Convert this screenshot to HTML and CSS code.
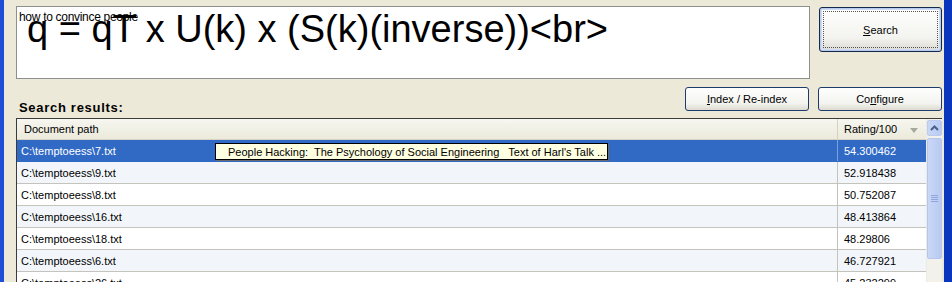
FILE: index.html
```html
<!DOCTYPE html>
<html>
<head>
<meta charset="utf-8">
<link rel="stylesheet" href="styles.css">
</head>
<body>
<div class="window">
  <div class="content">
    <div class="top">
      <div class="query">
        <span class="hint">how to convince people</span>
        <span class="hint-line"></span>
        <div class="big">q = qT x U(k) x (S(k)(inverse))&lt;br&gt;</div>
      </div>
      <div class="btn search"><span class="focus"><u>S</u>earch</span></div>
    </div>
    <div class="mid">
      <div class="label">Search results:</div>
      <div class="btn small idx"><u>I</u>ndex / Re-index</div>
      <div class="btn small cfg">Co<u>n</u>figure</div>
    </div>
    <div class="list">
      <div class="table">
        <div class="row head">
          <div class="c1">Document path</div>
          <div class="c2">Rating/100 <span class="sort"></span></div>
        </div>
        <div class="row sel">
          <div class="c1">C:\temptoeess\7.txt</div>
          <div class="c2">54.300462</div>
          <div class="tip">People Hacking:&nbsp; The Psychology of Social Engineering&nbsp;&nbsp; Text of Harl's Talk ...</div>
        </div>
        <div class="row alt"><div class="c1">C:\temptoeess\9.txt</div><div class="c2">52.918438</div></div>
        <div class="row"><div class="c1">C:\temptoeess\8.txt</div><div class="c2">50.752087</div></div>
        <div class="row alt"><div class="c1">C:\temptoeess\16.txt</div><div class="c2">48.413864</div></div>
        <div class="row"><div class="c1">C:\temptoeess\18.txt</div><div class="c2">48.29806</div></div>
        <div class="row alt"><div class="c1">C:\temptoeess\6.txt</div><div class="c2">46.727921</div></div>
        <div class="row"><div class="c1">C:\temptoeess\26.txt</div><div class="c2">45.232299</div></div>
      </div>
      <div class="scroll">
        <div class="arrow"><svg width="9" height="6" viewBox="0 0 9 6"><path d="M1 5 L4.5 1.5 L8 5" fill="none" stroke="#4d6185" stroke-width="2"/></svg></div>
        <div class="thumb"><span></span><span></span><span></span><span></span></div>
      </div>
    </div>
  </div>
</div>
</body>
</html>
```
FILE: styles.css
```css
* { box-sizing: border-box; }
html, body { margin: 0; padding: 0; }
body {
  width: 952px; height: 282px; overflow: hidden;
  font-family: "Liberation Sans", Arial, sans-serif;
  font-size: 11px; color: #000;
}
.window {
  height: 282px;
  background: #ece9d8;
  border-left: 4px solid #1f4fd6;
  border-right: 8px solid #0a35bd;
}
.content { padding: 6px 2px 0 12px; }
.top { display: flex; align-items: flex-start; height: 81px; }
.query {
  position: relative;
  width: 794px; height: 73px;
  background: #fff;
  border: 1px solid #8e8f8f;
  overflow: hidden;
}
.hint {
  position: absolute; left: 2px; top: 3px; z-index: 1;
  font-size: 12px; letter-spacing: -0.3px;
}
.hint-line {
  position: absolute; left: 98px; top: 8px; z-index: 1;
  width: 21px; height: 2px; background: #000;
}
.big {
  padding: 0 0 0 10px;
  font-size: 38px; line-height: 38px;
  margin-top: 3px;
  white-space: nowrap;
}
.btn {
  display: flex; align-items: center; justify-content: center;
  border: 1px solid #1c3c6c;
  border-radius: 3px;
  background: linear-gradient(#fefefe, #f3f3ef 70%, #dcdad0);
  font-size: 11px;
}
.search {
  margin-left: 9px; margin-top: 1px;
  width: 123px; height: 45px;
  border-color: #13284a;
  box-shadow: inset 0 0 0 1px #b8cbef, inset 0 0 0 2px #cfdcf4;
  padding: 3px;
}
.focus {
  flex: 1; align-self: stretch;
  display: flex; align-items: center; justify-content: center;
  border: 1px dotted #555;
}
.mid { display: flex; align-items: flex-start; height: 31px; }
.label {
  flex: 1;
  font-weight: bold; font-size: 13px;
  padding: 13px 0 0 3px; letter-spacing: 0.7px;
}
.small { width: 124px; height: 24px; margin-right: 9px; }
.cfg { margin-right: 0; }
.list {
  display: flex;
  height: 170px;
  border: 1px solid #3b3b3b;
  border-right: 0;
  overflow: hidden;
}
.table { flex: 1; background: #fff; }
.row {
  position: relative;
  display: grid; grid-template-columns: 821px 1fr;
  height: 22px;
  border-bottom: 1px solid #c4c3bc;
}
.row > div { display: flex; align-items: center; }
.c1 { padding-left: 4px; border-right: 1px solid #c4c3bc; }
.c2 { padding-left: 6px; }
.alt { background: #f2f6fb; }
.head {
  height: 21px;
  background: linear-gradient(#f7f6f0, #ebeadb);
  border-bottom: 1px solid #d6d2c2;
}
.head .c1 { padding-left: 7px; border-right: 1px solid #d6d2c2; }
.head .c2 { padding-left: 6px; }
.sort {
  margin-left: 13px; margin-top: 2px;
  border-left: 4px solid transparent; border-right: 4px solid transparent;
  border-top: 5px solid #a8a8a0;
}
.sel { background: #316ac5; color: #fff; border-bottom-color: #316ac5; }
.sel .c1 { border-right-color: #7aa0dc; }
.tip {
  position: absolute; left: 198px; top: 3px;
  height: 17px; width: 393px;
  background: #ffffe1; color: #000;
  border: 1px solid #000;
  box-shadow: 1px 1px 0 #6a6a6a;
  padding-left: 12px;
  font-size: 11px; white-space: nowrap;
  overflow: hidden;
}
.scroll {
  width: 16px;
  background: #f3f1ec;
  border-left: 1px solid #ecebe3;
  padding-top: 1px;
}
.arrow {
  height: 16px;
  display: flex; align-items: center; justify-content: center;
  background: linear-gradient(90deg, #c8d6f7, #b9cbf3);
  border: 1px solid #bccaf0; border-radius: 2px;
}
.thumb {
  margin-top: 2px;
  height: 121px;
  background: linear-gradient(90deg, #cad7f6, #b8caf2);
  border: 1px solid #b5c7ef; border-radius: 2px;
  display: flex; flex-direction: column; align-items: center; justify-content: center; gap: 1px;
}
.thumb span { display: block; width: 7px; height: 1px; background: #8ea6dc; }
```
